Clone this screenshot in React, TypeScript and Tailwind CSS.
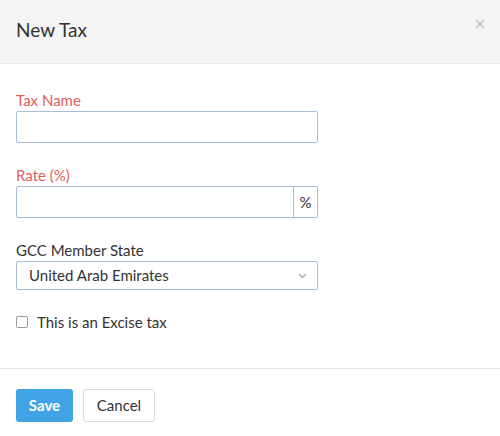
import React from "react";

export default function App() {
  return (
    <div className="w-[500px] h-[436px] bg-white" style={{ fontFamily: "Lato, 'Open Sans', sans-serif" }}>
      <div className="h-[64px] bg-[#f4f4f4] border-b border-[#e5e5e5] flex items-center justify-between pl-4 pr-[15px]">
        <h1 className="text-[19px] text-[#333] -mt-[3px]">New Tax</h1>
        <svg width="10" height="10" viewBox="0 0 10 10" className="-mt-[15px]">
          <path d="M1 1 L9 9 M9 1 L1 9" stroke="#c2c2c2" strokeWidth="1.6" />
        </svg>
      </div>
      <div className="px-4 pt-[26px] pb-[36px]">
        <div className="flex flex-col">
          <label className="text-[15px] leading-[20px] text-[#e05d5d] mb-[1px]">Tax Name</label>
          <input className="w-[302px] h-[32px] border border-[#a9bcd9] rounded-[2px] outline-none px-3 text-[15px]" />
        </div>
        <div className="flex flex-col mt-[22px]">
          <label className="text-[15px] leading-[20px] text-[#e05d5d] mb-[1px]">Rate (%)</label>
          <div className="w-[302px] h-[32px] border border-[#a9bcd9] rounded-[2px] flex">
            <input className="flex-1 min-w-0 outline-none px-3 text-[15px]" />
            <div className="w-[24px] border-l border-[#a9bcd9] flex items-center justify-center text-[15px] text-[#333]">%</div>
          </div>
        </div>
        <div className="flex flex-col mt-[22px]">
          <label className="text-[15px] leading-[20px] text-[#333] mb-[1px]">GCC Member State</label>
          <div className="w-[302px] h-[29px] border border-[#a9bcd9] rounded-[2px] flex items-center justify-between pl-3 pr-[10px]">
            <span className="text-[15px] text-[#333]">United Arab Emirates</span>
            <svg width="9" height="6" viewBox="0 0 9 6">
              <path d="M1 1 L4.5 4.5 L8 1" fill="none" stroke="#a6a6a6" strokeWidth="1.3" />
            </svg>
          </div>
        </div>
        <div className="flex items-center mt-[22px] h-[20px]">
          <span className="w-[12px] h-[12px] border border-[#9a9a9a] rounded-[2px] bg-white" />
          <span className="ml-[9px] text-[15px] text-[#333]">This is an Excise tax</span>
        </div>
      </div>
      <div className="border-t border-[#e6e6e6] px-4 pt-[20px] flex gap-[10px]">
        <button className="w-[57px] h-[33px] bg-[#3fa3e6] text-white font-bold text-[15px] rounded-[3px]">Save</button>
        <button className="w-[72px] h-[33px] bg-white border border-[#d9d9d9] text-[#333] text-[15px] rounded-[3px]">Cancel</button>
      </div>
    </div>
  );
}
